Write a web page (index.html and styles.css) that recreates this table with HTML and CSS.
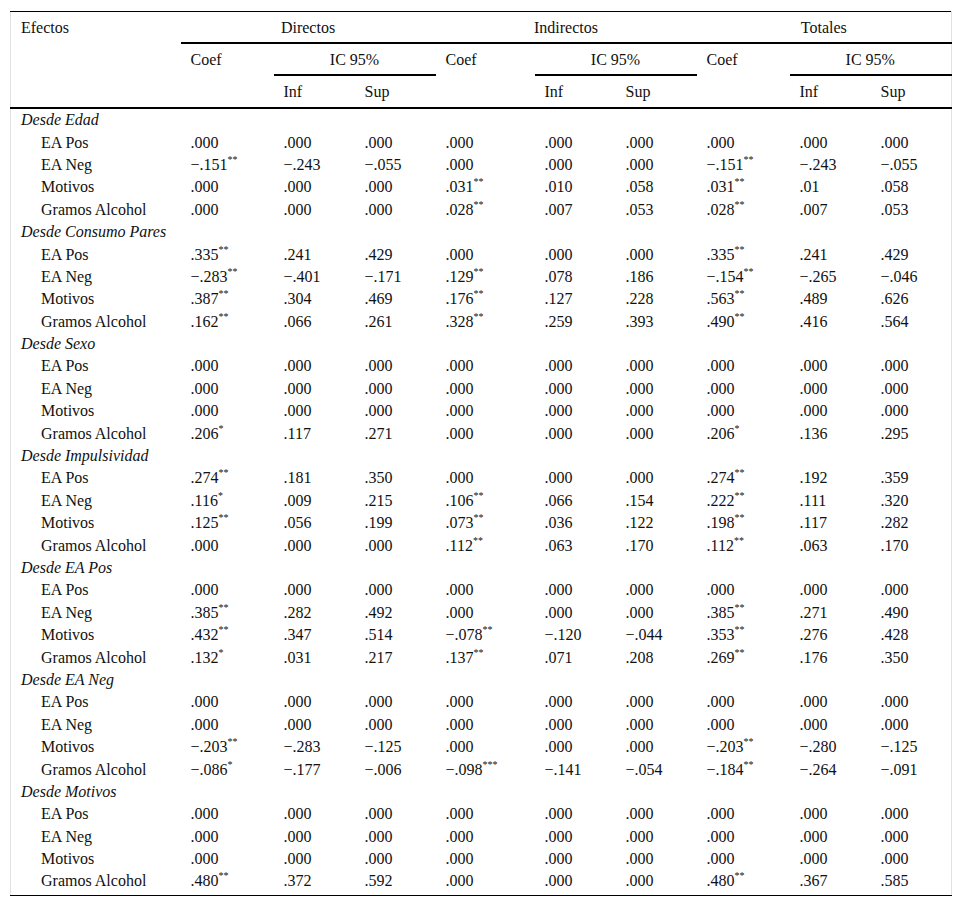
FILE: index.html
```html
<!DOCTYPE html>
<html lang="es">
<head>
<meta charset="utf-8">
<title>Efectos</title>
<link rel="stylesheet" href="styles.css">
</head>
<body>
<div class="wrap">
<table class="t">
<colgroup>
<col class="c-lab"><col class="c-coef"><col class="c-ic"><col class="c-ic"><col class="c-coef2"><col class="c-ic"><col class="c-ic"><col class="c-coef"><col class="c-ic"><col class="c-ic">
</colgroup>
<thead>
<tr class="h1">
<th rowspan="3" class="hl">Efectos</th>
<th colspan="3" class="grp">Directos</th>
<th colspan="3" class="grp">Indirectos</th>
<th colspan="3" class="grp">Totales</th>
</tr>
<tr class="h2">
<th rowspan="2" class="hl">Coef</th><th colspan="2" class="grp">IC 95%</th>
<th rowspan="2" class="hl">Coef</th><th colspan="2" class="grp">IC 95%</th>
<th rowspan="2" class="hl">Coef</th><th colspan="2" class="grp">IC 95%</th>
</tr>
<tr class="h3">
<th class="hb">Inf</th><th class="hb">Sup</th>
<th class="hb">Inf</th><th class="hb">Sup</th>
<th class="hb">Inf</th><th class="hb">Sup</th>
</tr>
</thead>
<tbody>
<tr><td class="sec" colspan="10">Desde Edad</td></tr>
<tr><td class="lab">EA Pos</td><td>.000</td><td>.000</td><td>.000</td><td>.000</td><td>.000</td><td>.000</td><td>.000</td><td>.000</td><td>.000</td></tr>
<tr><td class="lab">EA Neg</td><td>−.151<sup>**</sup></td><td>−.243</td><td>−.055</td><td>.000</td><td>.000</td><td>.000</td><td>−.151<sup>**</sup></td><td>−.243</td><td>−.055</td></tr>
<tr><td class="lab">Motivos</td><td>.000</td><td>.000</td><td>.000</td><td>.031<sup>**</sup></td><td>.010</td><td>.058</td><td>.031<sup>**</sup></td><td>.01</td><td>.058</td></tr>
<tr><td class="lab">Gramos Alcohol</td><td>.000</td><td>.000</td><td>.000</td><td>.028<sup>**</sup></td><td>.007</td><td>.053</td><td>.028<sup>**</sup></td><td>.007</td><td>.053</td></tr>

<tr><td class="sec" colspan="10">Desde Consumo Pares</td></tr>
<tr><td class="lab">EA Pos</td><td>.335<sup>**</sup></td><td>.241</td><td>.429</td><td>.000</td><td>.000</td><td>.000</td><td>.335<sup>**</sup></td><td>.241</td><td>.429</td></tr>
<tr><td class="lab">EA Neg</td><td>−.283<sup>**</sup></td><td>−.401</td><td>−.171</td><td>.129<sup>**</sup></td><td>.078</td><td>.186</td><td>−.154<sup>**</sup></td><td>−.265</td><td>−.046</td></tr>
<tr><td class="lab">Motivos</td><td>.387<sup>**</sup></td><td>.304</td><td>.469</td><td>.176<sup>**</sup></td><td>.127</td><td>.228</td><td>.563<sup>**</sup></td><td>.489</td><td>.626</td></tr>
<tr><td class="lab">Gramos Alcohol</td><td>.162<sup>**</sup></td><td>.066</td><td>.261</td><td>.328<sup>**</sup></td><td>.259</td><td>.393</td><td>.490<sup>**</sup></td><td>.416</td><td>.564</td></tr>

<tr><td class="sec" colspan="10">Desde Sexo</td></tr>
<tr><td class="lab">EA Pos</td><td>.000</td><td>.000</td><td>.000</td><td>.000</td><td>.000</td><td>.000</td><td>.000</td><td>.000</td><td>.000</td></tr>
<tr><td class="lab">EA Neg</td><td>.000</td><td>.000</td><td>.000</td><td>.000</td><td>.000</td><td>.000</td><td>.000</td><td>.000</td><td>.000</td></tr>
<tr><td class="lab">Motivos</td><td>.000</td><td>.000</td><td>.000</td><td>.000</td><td>.000</td><td>.000</td><td>.000</td><td>.000</td><td>.000</td></tr>
<tr><td class="lab">Gramos Alcohol</td><td>.206<sup>*</sup></td><td>.117</td><td>.271</td><td>.000</td><td>.000</td><td>.000</td><td>.206<sup>*</sup></td><td>.136</td><td>.295</td></tr>

<tr><td class="sec" colspan="10">Desde Impulsividad</td></tr>
<tr><td class="lab">EA Pos</td><td>.274<sup>**</sup></td><td>.181</td><td>.350</td><td>.000</td><td>.000</td><td>.000</td><td>.274<sup>**</sup></td><td>.192</td><td>.359</td></tr>
<tr><td class="lab">EA Neg</td><td>.116<sup>*</sup></td><td>.009</td><td>.215</td><td>.106<sup>**</sup></td><td>.066</td><td>.154</td><td>.222<sup>**</sup></td><td>.111</td><td>.320</td></tr>
<tr><td class="lab">Motivos</td><td>.125<sup>**</sup></td><td>.056</td><td>.199</td><td>.073<sup>**</sup></td><td>.036</td><td>.122</td><td>.198<sup>**</sup></td><td>.117</td><td>.282</td></tr>
<tr><td class="lab">Gramos Alcohol</td><td>.000</td><td>.000</td><td>.000</td><td>.112<sup>**</sup></td><td>.063</td><td>.170</td><td>.112<sup>**</sup></td><td>.063</td><td>.170</td></tr>

<tr><td class="sec" colspan="10">Desde EA Pos</td></tr>
<tr><td class="lab">EA Pos</td><td>.000</td><td>.000</td><td>.000</td><td>.000</td><td>.000</td><td>.000</td><td>.000</td><td>.000</td><td>.000</td></tr>
<tr><td class="lab">EA Neg</td><td>.385<sup>**</sup></td><td>.282</td><td>.492</td><td>.000</td><td>.000</td><td>.000</td><td>.385<sup>**</sup></td><td>.271</td><td>.490</td></tr>
<tr><td class="lab">Motivos</td><td>.432<sup>**</sup></td><td>.347</td><td>.514</td><td>−.078<sup>**</sup></td><td>−.120</td><td>−.044</td><td>.353<sup>**</sup></td><td>.276</td><td>.428</td></tr>
<tr><td class="lab">Gramos Alcohol</td><td>.132<sup>*</sup></td><td>.031</td><td>.217</td><td>.137<sup>**</sup></td><td>.071</td><td>.208</td><td>.269<sup>**</sup></td><td>.176</td><td>.350</td></tr>

<tr><td class="sec" colspan="10">Desde EA Neg</td></tr>
<tr><td class="lab">EA Pos</td><td>.000</td><td>.000</td><td>.000</td><td>.000</td><td>.000</td><td>.000</td><td>.000</td><td>.000</td><td>.000</td></tr>
<tr><td class="lab">EA Neg</td><td>.000</td><td>.000</td><td>.000</td><td>.000</td><td>.000</td><td>.000</td><td>.000</td><td>.000</td><td>.000</td></tr>
<tr><td class="lab">Motivos</td><td>−.203<sup>**</sup></td><td>−.283</td><td>−.125</td><td>.000</td><td>.000</td><td>.000</td><td>−.203<sup>**</sup></td><td>−.280</td><td>−.125</td></tr>
<tr><td class="lab">Gramos Alcohol</td><td>−.086<sup>*</sup></td><td>−.177</td><td>−.006</td><td>−.098<sup>***</sup></td><td>−.141</td><td>−.054</td><td>−.184<sup>**</sup></td><td>−.264</td><td>−.091</td></tr>

<tr><td class="sec" colspan="10">Desde Motivos</td></tr>
<tr><td class="lab">EA Pos</td><td>.000</td><td>.000</td><td>.000</td><td>.000</td><td>.000</td><td>.000</td><td>.000</td><td>.000</td><td>.000</td></tr>
<tr><td class="lab">EA Neg</td><td>.000</td><td>.000</td><td>.000</td><td>.000</td><td>.000</td><td>.000</td><td>.000</td><td>.000</td><td>.000</td></tr>
<tr><td class="lab">Motivos</td><td>.000</td><td>.000</td><td>.000</td><td>.000</td><td>.000</td><td>.000</td><td>.000</td><td>.000</td><td>.000</td></tr>
<tr class="last"><td class="lab">Gramos Alcohol</td><td>.480<sup>**</sup></td><td>.372</td><td>.592</td><td>.000</td><td>.000</td><td>.000</td><td>.480<sup>**</sup></td><td>.367</td><td>.585</td></tr>
</tbody>
</table>
</div>
</body>
</html>
```

FILE: styles.css
```css
html, body {
  margin: 0;
  padding: 0;
  background: #fff;
}

.wrap {
  padding: 11px 10px 0 10px;
}

.t {
  width: 942px;
  table-layout: fixed;
  border-collapse: collapse;
  font-family: "Liberation Serif", "Times New Roman", serif;
  font-size: 16px;
  color: #111;
  border-top: 1px solid #000;
  border-bottom: 1px solid #000;
  border-left: 1px solid #e2e2e2;
  border-right: 1px solid #e2e2e2;
}

.c-lab { width: 170px; }
.c-coef { width: 93px; }
.c-coef2 { width: 99px; }
.c-ic { width: 81px; }

.t th {
  font-weight: normal;
  text-align: left;
  vertical-align: top;
  padding: 7px 0 0 10px;
  height: 23px;
  line-height: 18px;
}

.t th.grp {
  text-align: center;
  padding-left: 0;
  border-bottom: 2px solid #000;
}

.t .h1 th.hl,
.t .h2 th.hl,
.t th.hb {
  border-bottom: 2px solid #000;
}

.t .h3 th {
  height: 24px;
}

.t td {
  padding: 0 0 0 10px;
  height: 22.4px;
  line-height: 18px;
  vertical-align: middle;
  white-space: nowrap;
}

.t td.sec {
  font-style: italic;
}

.t td.lab {
  padding-left: 30px;
}

.t tr.last td {
  height: 23px;
  vertical-align: top;
  padding-top: 2px;
}

.t sup {
  font-size: 10px;
  line-height: 0;
  vertical-align: 7px;
}
```
